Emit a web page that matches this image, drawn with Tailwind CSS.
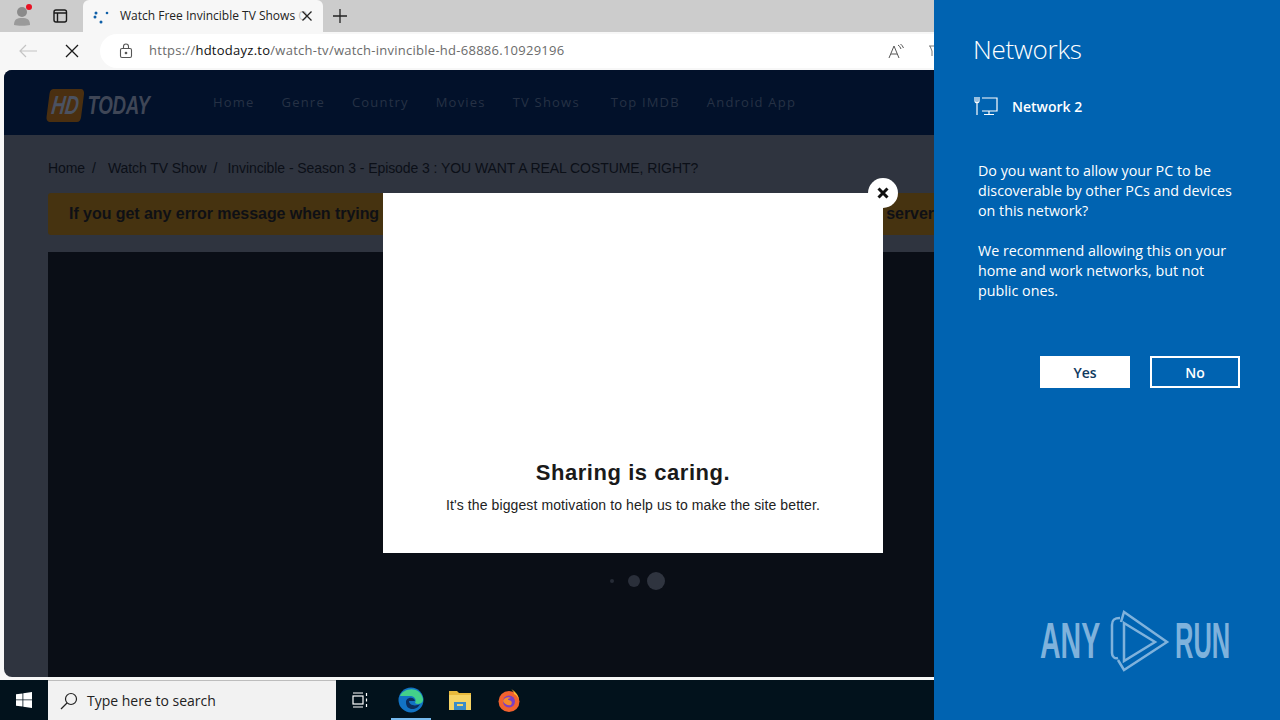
<!DOCTYPE html>
<html lang="en">
<head>
  <meta charset="UTF-8">
  <meta name="viewport" content="width=device-width, initial-scale=1.0">
  <title>Watch Free Invincible TV Shows</title>
  <script src="https://cdn.jsdelivr.net/npm/@tailwindcss/browser@4"></script>
</head>
<body class="w-[1280px] h-[720px] overflow-hidden flex font-['Open_Sans',sans-serif]">

  <!-- browser + taskbar -->
  <div class="w-[934px] h-[720px] flex flex-col relative shrink-0">

    <!-- tab strip -->
    <div class="h-[32px] bg-[#cccccc] flex items-center relative shrink-0">
      <div class="w-[48px] h-[32px] flex items-center justify-center relative ml-[-2px]">
        <svg width="18" height="20" viewBox="0 0 18 20"><circle cx="9" cy="6" r="5" fill="#8a8a8a"/><path d="M1 19c0-6 3-7 8-7s8 1 8 7c-3 1-13 1-16 0z" fill="#9a9a9a"/></svg>
        <span class="absolute left-[28px] top-[4px] w-[6px] h-[6px] rounded-full bg-[#e81123]"></span>
      </div>
      <div class="w-[32px] flex justify-center ml-[-2px]">
        <svg width="16" height="16" viewBox="0 0 16 16" fill="none" stroke="#1a1a1a" stroke-width="1.4"><rect x="2" y="2" width="12.5" height="12" rx="2"/><path d="M2 5h12.5M5.500 5v9"/></svg>
      </div>
      <div class="w-[240px] h-[32px] ml-[7px] bg-[#f7f7f7] rounded-t-[6px] flex items-center pl-[10px] shrink-0">
        <svg width="16" height="16" viewBox="0 0 16 16" fill="#0f5fa8" class="shrink-0"><circle cx="3" cy="5" r="1.500"/><circle cx="14" cy="5" r="1.300"/><circle cx="8" cy="14" r="1.500"/><circle cx="2" cy="9" r="1.500"/></svg>
        <span class="ml-[11px] w-[176px] whitespace-nowrap text-[12px] text-[#222222]">Watch Free Invincible TV Shows <span class="text-[#c4c4c4]">O</span></span>
        <svg width="12" height="12" viewBox="0 0 12 12" class="ml-[5px]" stroke="#222222" stroke-width="1.3"><path d="M1.500 1.500l9 9M10.500 1.500l-9 9"/></svg>
      </div>
      <svg width="14" height="14" viewBox="0 0 14 14" class="ml-[10px]" stroke="#222222" stroke-width="1.3"><path d="M7 0v14M0 7h14"/></svg>
    </div>

    <!-- toolbar -->
    <div class="h-[38px] bg-[#f7f7f7] flex items-center shrink-0">
      <div class="w-[56px] flex justify-center">
        <svg width="18" height="14" viewBox="0 0 18 14" fill="none" stroke="#c4c4c4" stroke-width="1.2"><path d="M18 7H1M7 1L1 7l6 6"/></svg>
      </div>
      <div class="w-[32px] flex justify-center">
        <svg width="14" height="14" viewBox="0 0 14 14" stroke="#1a1a1a" stroke-width="1.3"><path d="M1 1l12 12M13 1L1 13"/></svg>
      </div>
      <div class="ml-[12px] flex-1 h-[34px] bg-white rounded-l-[17px] flex items-center pl-[19px]">
        <svg width="14" height="16" viewBox="0 0 14 16" fill="none" stroke="#555555" stroke-width="1.1"><rect x="1.500" y="5.500" width="11" height="9" rx="1.500"/><path d="M4.500 5.500V3.500a2.500 2.500 0 0 1 5 0v2"/><circle cx="7" cy="10" r="0.8" fill="#555555"/></svg>
        <span class="ml-[16px] text-[13px] tracking-[0.26px] text-[#6b6b6b] whitespace-nowrap">https://<span class="text-[#111111]">hdtodayz.to</span>/watch-tv/watch-invincible-hd-68886.10929196</span>
        <svg width="18" height="16" viewBox="0 0 18 16" fill="none" stroke="#555555" stroke-width="1" class="ml-auto"><path d="M1 15L6 3l5 12M3 11h6"/><path d="M10 2q2 1 3 4M12.500 1q2 1.500 3 4"/></svg>
        <svg width="5" height="12" viewBox="0 0 5 12" fill="none" stroke="#777777" stroke-width="1" class="ml-[23px]"><path d="M0 1h5M1 1l2 5v5"/></svg>
      </div>
    </div>

    <!-- dimmed page -->
    <div class="h-[607px] bg-[#f7f7f7] pl-[4px] shrink-0">
      <div class="h-[607px] bg-[#2f343f] rounded-l-[8px] overflow-hidden font-['Liberation_Sans',sans-serif]">
        <div class="h-[65px] bg-[#02112a] flex items-center pl-[44px]">
          <div class="w-[165px] h-[33px] relative">
            <div class="flex items-center scale-x-[0.72] origin-left w-[160px] whitespace-nowrap">
              <span class="w-[48px] h-[33px] bg-[#4a2f10] rounded-[5px] skew-x-[-10deg] flex items-center justify-center text-[#4b5261] text-[26px] font-bold italic">HD</span>
              <span class="ml-[7px] text-[#3f4656] text-[26px] font-bold italic tracking-[-0.5px]">TODAY</span>
            </div>
          </div>
          <nav class="flex gap-[27px] text-[13px] tracking-[1.2px] text-[#263145] font-['Open_Sans',sans-serif]">
            <span>Home</span><span>Genre</span><span>Country</span><span>Movies</span><span>TV Shows</span><span class="ml-[4px]">Top IMDB</span><span>Android App</span>
          </nav>
        </div>
        <div class="h-[58px] pl-[44px] pt-[25px] text-[14px] leading-[16px] tracking-[-0.07px] text-[#0b0f17] whitespace-nowrap">
          Home<span class="ml-[7px] mr-[12px]">/</span>Watch TV Show<span class="ml-[7px] mr-[10px]">/</span>Invincible - Season 3 - Episode 3 : YOU WANT A REAL COSTUME, RIGHT?
        </div>
        <div class="ml-[44px] h-[42px] bg-[#463310] rounded-l-[3px] pl-[21px] flex items-center justify-between text-[16px] tracking-[-0.05px] font-bold text-[#0f1015] whitespace-nowrap">
          <span>If you get any error message when trying</span><span>server</span>
        </div>
        <div class="ml-[44px] mt-[17px] h-[425px] bg-[#0a0e16] relative">
          <div class="absolute left-[562px] top-[320px] flex items-center">
            <span class="w-[4px] h-[4px] rounded-full bg-[#262b36]"></span>
            <span class="w-[12px] h-[12px] rounded-full bg-[#2a2f3a] ml-[14px]"></span>
            <span class="w-[18px] h-[18px] rounded-full bg-[#2f343f] ml-[7px]"></span>
          </div>
        </div>
      </div>
    </div>

    <!-- share modal -->
    <div class="absolute left-[383px] top-[193px] w-[500px] h-[360px] bg-white flex flex-col items-center pt-[267px] font-['Liberation_Sans',sans-serif]">
      <div class="text-[22px] leading-[26px] font-bold text-[#1a1a1a] tracking-[0.55px]">Sharing is caring.</div>
      <div class="mt-[10px] text-[14px] leading-[18px] text-[#222222] tracking-[0.1px]">It's the biggest motivation to help us to make the site better.</div>
      <div class="absolute right-[-15px] top-[-15px] w-[30px] h-[30px] rounded-full bg-white flex items-center justify-center">
        <svg width="12" height="12" viewBox="0 0 12 12" stroke="#111111" stroke-width="3"><path d="M1.500 1.500l9 9M10.500 1.500l-9 9"/></svg>
      </div>
    </div>

    <!-- taskbar -->
    <div class="h-[43px] bg-[#f7f7f7] shrink-0 flex flex-col">
      <div class="h-[3px]"></div>
      <div class="h-[40px] bg-[#02121c] flex items-center">
        <div class="w-[48px] flex justify-center">
          <svg width="16" height="16" viewBox="0 0 16 16" fill="#ffffff"><path d="M0 2.300L6.500 1.400V7.500H0zM7.300 1.300L16 0V7.500H7.300zM0 8.300H6.500V14.600L0 13.700zM7.300 8.300H16V16L7.300 14.700z"/></svg>
        </div>
        <div class="w-[288px] h-[40px] bg-[#f2f2f2] border-t border-[#bdbdbd] flex items-center pl-[12px]">
          <svg width="18" height="18" viewBox="0 0 18 18" fill="none" stroke="#222222" stroke-width="1.2"><circle cx="11" cy="7" r="5.500"/><path d="M7 11l-6 6"/></svg>
          <span class="ml-[9px] text-[14px] text-[#222222]">Type here to search</span>
        </div>
        <div class="w-[48px] flex justify-center">
          <svg width="16" height="16" viewBox="0 0 16 16" fill="none" stroke="#ffffff" stroke-width="1.200"><path d="M1 1h10M1 15h10"/><rect x="1" y="4" width="10" height="8"/><path d="M14.500 1v3M14.500 6.500v3M14.500 12v3"/></svg>
        </div>
        <div class="w-[54px] h-[40px] flex justify-center items-center relative">
          <svg width="26" height="26" viewBox="0 0 26 26"><circle cx="13" cy="13" r="12.500" fill="#1273c4"/><path d="M2 9C5 1 22 -2 25 12c.5 5-5 6-8 4 2-4-1-7-5-7-4 0-8 0-10 0z" fill="#43d08a"/><path d="M8 15c0-5 8-6 9-1h-6c0 4 6 6 11 3-2 6-14 8-14-2z" fill="#0b2d5c"/></svg>
          <span class="absolute bottom-0 left-[7px] right-[7px] h-[2px] bg-[#76b9ed]"></span>
        </div>
        <div class="w-[44px] flex justify-center">
          <svg width="22" height="20" viewBox="0 0 22 20"><path d="M0 1h8l2 2h12v5H0z" fill="#e8b93c"/><rect y="5" width="22" height="15" fill="#f6d365"/><rect x="5" y="12" width="12" height="8" fill="#3b8bc9"/><rect x="8" y="14" width="6" height="2" fill="#f6d365"/></svg>
        </div>
        <div class="w-[54px] flex justify-center">
          <svg width="24" height="24" viewBox="0 0 24 24"><circle cx="12" cy="13.500" r="10.500" fill="#f2622e"/><path d="M13 0c4 3 9 6 9 13 0-3-3-6-5-7 0-3-2-4-4-6z" fill="#ffb52e"/><circle cx="12" cy="13.500" r="6" fill="#7b3fc4"/><path d="M6 13c1-3 5-5 8-3-2 0-3 1-3 2 3 0 5 2 3 5-3 1-7-1-8-4z" fill="#f58a2a"/></svg>
        </div>
      </div>
    </div>
  </div>

  <!-- networks flyout -->
  <aside class="w-[346px] h-[720px] bg-[#0063b1] text-white relative shrink-0 font-['Open_Sans',sans-serif] pl-[39px]">
    <h1 class="pt-[31px] text-[26px] leading-[36px] tracking-[-0.25px] font-light">Networks</h1>
    <div class="mt-[25px] flex items-center h-[28px]">
      <svg width="24" height="20" viewBox="0 0 24 20" fill="none" stroke="#ffffff" stroke-width="1.200" class="ml-[1px]"><path d="M1 1v4a2 2 0 0 0 4 0V1M3 1v18M8 2h15v13H8M15 15v3M10 18.500h10"/></svg>
      <span class="ml-[14px] text-[14px] font-semibold">Network 2</span>
    </div>
    <div class="ml-[5px] mt-[41px] w-[265px] text-[14.3px] leading-[20px]">
      <p>Do you want to allow your PC to be discoverable by other PCs and devices on this network?</p>
      <p class="mt-[20px]">We recommend allowing this on your home and work networks, but not public ones.</p>
    </div>
    <div class="mt-[55px] ml-[67px] flex gap-[20px] text-[14px] font-semibold">
      <button class="w-[90px] h-[32px] bg-white text-[#0f3a5f]">Yes</button>
      <button class="w-[90px] h-[32px] border-2 border-white">No</button>
    </div>
    <div class="absolute left-[106px] top-[610px] flex items-center text-[#7fb2dc] font-['Liberation_Sans',sans-serif] text-[50px] leading-[60px] font-bold">
      <span class="w-[61px] scale-x-[0.57] origin-left">ANY</span>
      <svg width="65" height="62" viewBox="0 0 65 62" fill="none" stroke="#7fb2dc" stroke-width="2.500" class="ml-[8px]"><path d="M11 8C5 8 3 10 3 15V43c0 4 3 6 6 5"/><path d="M12 12L15 2 58 32 15 60 9 50"/><path d="M15 13L46 32 15 51Z"/></svg>
      <span class="w-[55px] ml-[1px] scale-x-[0.51] origin-left">RUN</span>
    </div>
  </aside>

</body>
</html>
